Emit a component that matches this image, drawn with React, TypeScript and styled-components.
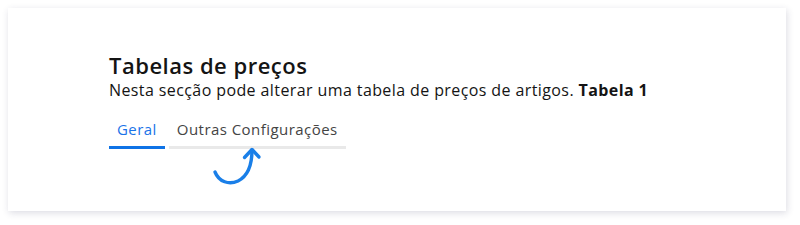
import styled, { createGlobalStyle } from "styled-components";

const GlobalStyle = createGlobalStyle`
  html, body {
    margin: 0;
    padding: 0;
    background: #ffffff;
    font-family: "Open Sans", "Liberation Sans", sans-serif;
  }
`;

const tabs = [
  { label: "Geral", active: true },
  { label: "Outras Configurações", active: false },
];

export default function App() {
  return (
    <>
      <GlobalStyle />
      <Page>
        <Card>
          <Title>Tabelas de preços</Title>
          <Subtitle>
            Nesta secção pode alterar uma tabela de preços de artigos.{" "}
            <strong>Tabela 1</strong>
          </Subtitle>
          <TabBar>
            {tabs.map((t) => (
              <Tab key={t.label} $active={t.active}>
                {t.label}
              </Tab>
            ))}
            <Hint width="60" height="50" viewBox="0 0 60 50">
              <path
                d="M10 32 C 14 42, 24 45, 33 41 C 43 36, 47 24, 47 10"
                fill="none"
                stroke="#1a7fe8"
                strokeWidth="3.4"
                strokeLinecap="round"
              />
              <path
                d="M39.5 17.5 L47 9.5 L54 17"
                fill="none"
                stroke="#1a7fe8"
                strokeWidth="3.4"
                strokeLinecap="round"
                strokeLinejoin="round"
              />
            </Hint>
          </TabBar>
        </Card>
      </Page>
    </>
  );
}

const Page = styled.div`
  padding: 8px;
  width: 800px;
  height: 225px;
  box-sizing: border-box;
`;

const Card = styled.div`
  width: 778px;
  height: 203px;
  box-sizing: border-box;
  background: #fff;
  box-shadow: 1px 2px 7px rgba(40, 40, 80, 0.16);
  padding: 42px 100px 0 101px;
  display: flex;
  flex-direction: column;
`;

const Title = styled.h1`
  margin: 0;
  font-size: 22px;
  font-weight: 600;
  letter-spacing: 0.5px;
  color: #141414;
  line-height: 30px;
`;

const Subtitle = styled.p`
  margin: 0;
  font-size: 16px;
  font-weight: 500;
  letter-spacing: 0.4px;
  color: #141414;
  line-height: 20px;

  strong {
    font-weight: 700;
  }
`;

const TabBar = styled.div`
  position: relative;
  display: flex;
  gap: 4px;
  margin-top: 15px;
`;

const Tab = styled.div<{ $active: boolean }>`
  padding: 4px 8px 7px;
  font-size: 15px;
  letter-spacing: 0.45px;
  color: ${(p) => (p.$active ? "#1a73e8" : "#444")};
  border-bottom: 3px solid ${(p) => (p.$active ? "#0f73e6" : "#e9e9e9")};
`;

const Hint = styled.svg`
  position: absolute;
  left: 96px;
  top: 25px;
`;
